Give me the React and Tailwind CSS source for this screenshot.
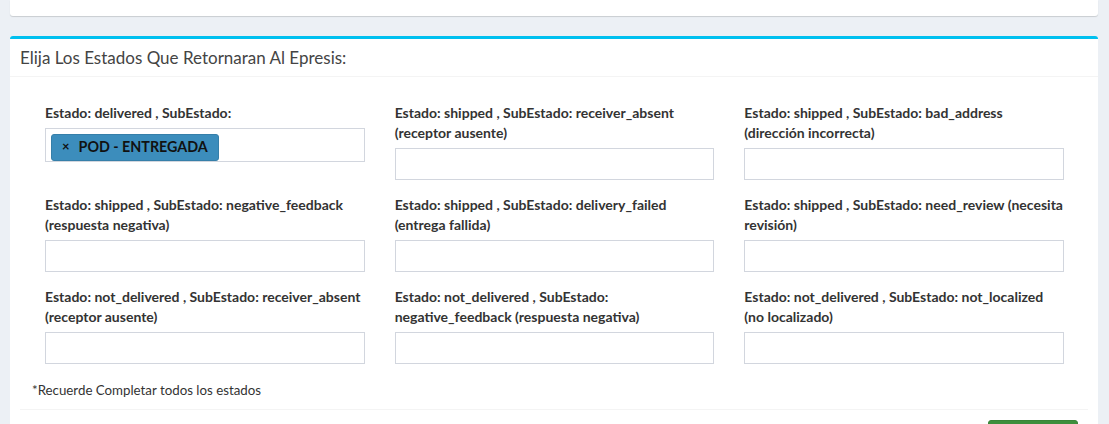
const estados = [
  { label: 'Estado: delivered , SubEstado:', value: 'POD - ENTREGADA' },
  { label: 'Estado: shipped , SubEstado: receiver_absent (receptor ausente)' },
  { label: 'Estado: shipped , SubEstado: bad_address (dirección incorrecta)' },
  { label: 'Estado: shipped , SubEstado: negative_feedback (respuesta negativa)' },
  { label: 'Estado: shipped , SubEstado: delivery_failed (entrega fallida)' },
  { label: 'Estado: shipped , SubEstado: need_review (necesita revisión)' },
  { label: 'Estado: not_delivered , SubEstado: receiver_absent (receptor ausente)' },
  { label: 'Estado: not_delivered , SubEstado: negative_feedback (respuesta negativa)' },
  { label: 'Estado: not_delivered , SubEstado: not_localized (no localizado)' },
];

const App = () => {
  return (
    <div className="min-h-screen bg-[#ecf0f5] pl-[10px] pr-[11px] font-['Lato',sans-serif] text-[#333]">
      <div className="h-[16px] bg-white rounded-b-[3px] shadow-[0_1px_1px_rgba(0,0,0,0.15)] mb-[20px]"></div>

      <div className="bg-white border-t-[3px] border-[#00c0ef] rounded-[3px]">
        <div className="h-[38px] flex items-center px-[10px] border-b border-[#f4f4f4]">
          <h3 className="text-[17px] text-[#444] leading-none">Elija Los Estados Que Retornaran Al Epresis:</h3>
        </div>

        <div className="pt-[26px] px-[10px]">
          <div className="grid grid-cols-3 gap-x-[30px] pl-[25px] pr-[24px]">
            {estados.map((e, i) => (
              <div key={i} className="mb-[15px] flex flex-col">
                <label className="text-[14px] font-bold leading-[20px] min-h-[40px] mb-[5px]">{e.label}</label>
                {e.value ? (
                  <div className="-mt-[20px] h-[34px] border border-[#d2d6de] flex items-center px-[5px]">
                    <span className="h-[27px] mt-[4px] flex items-center gap-[9px] pl-[10px] pr-[10px] bg-[#3c8dbc] border border-[#367fa9] rounded-[3px] text-[14.3px] font-bold text-[#111]">
                      <span className="text-[13px]">×</span>
                      {e.value}
                    </span>
                  </div>
                ) : (
                  <input type="text" className="h-[32px] border border-[#d2d6de] outline-none px-[12px] text-[14px]" />
                )}
              </div>
            ))}
          </div>
          <p className="pl-[12px] text-[13.3px] leading-[20px] mt-[1px] mb-[9px]">*Recuerde Completar todos los estados</p>
        </div>

        <div className="border-t border-[#f4f4f4] mx-[10px] pt-[10px] flex justify-end pr-[10px]">
          <button className="w-[90px] h-[34px] bg-[#3d8f3d] border border-[#398439] rounded-[3px] text-white text-[14px]">Guardar</button>
        </div>
      </div>
    </div>
  );
};

export default App;
